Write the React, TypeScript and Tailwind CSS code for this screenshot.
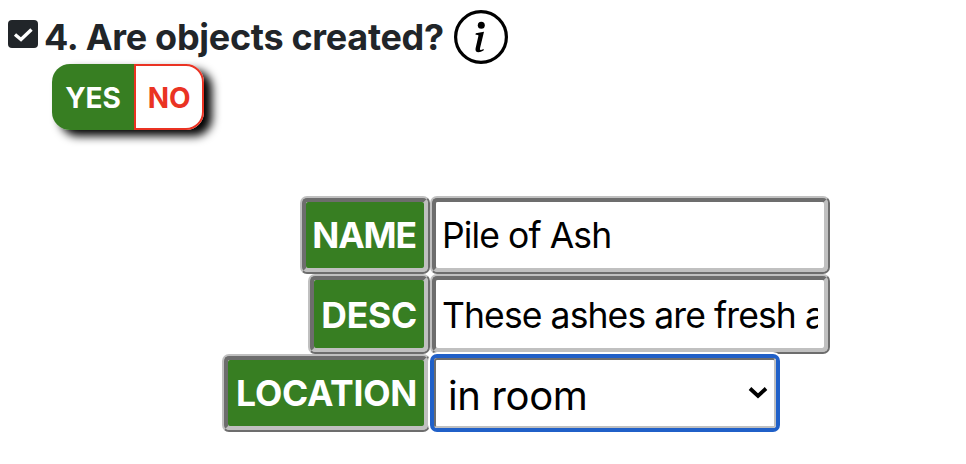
import type { ReactNode } from "react";

function Groove({ className, children }: { className: string; children: ReactNode }) {
  return (
    <div className={`shrink-0 rounded-[7px] border-2 border-t-[#c0c0c0] border-l-[#c0c0c0] border-r-[#6d6d6d] border-b-[#6d6d6d] bg-[#c0c0c0] ${className}`}>
      <div className="flex h-full items-center overflow-hidden rounded-[5px] border-4 border-t-[#6d6d6d] border-l-[#6d6d6d] border-r-[#c0c0c0] border-b-[#c0c0c0] bg-inherit">
        {children}
      </div>
    </div>
  );
}

function Label({ className, textClass, children }: { className: string; textClass: string; children: ReactNode }) {
  return (
    <Groove className={className}>
      <div className={`flex h-full w-full items-center justify-end rounded-[2px] bg-[#377e22] text-[35.5px] font-bold text-white ${textClass}`}>
        {children}
      </div>
    </Groove>
  );
}

function Field({ className, textClass, children }: { className: string; textClass: string; children: ReactNode }) {
  return (
    <Groove className={className}>
      <div className={`flex h-full w-full items-center rounded-[2px] bg-white px-[6px] text-[35.5px] tracking-[-0.9px] text-black ${textClass}`}>
        <div className="w-full overflow-hidden whitespace-nowrap">{children}</div>
      </div>
    </Groove>
  );
}

export default function App() {
  return (
    <div className="h-[464px] w-[966px] overflow-hidden bg-white font-['Inter',sans-serif] leading-[44px]">
      <div className="flex h-16 items-start">
        <svg className="mt-5 ml-2 h-7 w-[30px] shrink-0" viewBox="0 0 30 28">
          <rect width="30" height="28" rx="4" fill="#212529" />
          <path d="M7 14.5 L13 19.5 L23.5 9.5" fill="none" stroke="#fff" strokeWidth="3.4" />
        </svg>
        <h1 className="mt-[15px] ml-[6px] w-[410px] shrink-0 text-[36px] font-bold whitespace-nowrap text-[#212529]">
          <span className="tracking-[-0.3px]">4. Are objects created?</span>
        </h1>
        <svg className="mt-[10px] h-[54px] w-[54px] shrink-0" viewBox="0 0 54 54">
          <circle cx="27" cy="27" r="25.4" fill="#fff" stroke="#000" strokeWidth="3.2" />
          <circle cx="27.3" cy="15.2" r="3.5" fill="#000" />
          <path d="M21.8 23.3 L30 21.8 L26 38.3 Q25.5 40.3 27 39.9 L29.8 38.9 L29.5 40.6 Q26.8 42.3 24.5 42.3 Q20.9 42.1 21.6 38.3 L24.5 25.6 Q24 24.4 21.5 24.7Z" fill="#000" />
        </svg>
      </div>

      <div className="ml-[52px] flex h-[66px] w-[152px] rounded-[18px] text-[28px] font-bold tracking-[-0.1px] shadow-[8px_6px_10px_0px_#000]">
        <div className="flex w-[82px] items-center justify-center rounded-l-[18px] bg-[#377e22] pt-[2px] text-white">YES</div>
        <div className="flex w-[70px] items-center justify-center rounded-r-[18px] border-2 border-[#ea3323] bg-white pt-[2px] text-[#ea3323]">NO</div>
      </div>

      <div className="mt-[66px] flex flex-col">
        <div className="flex h-[78px] pl-[300px]">
          <Label className="h-[78px] w-[130px]" textClass="pt-[2px] pr-2 tracking-[-1.1px]">NAME</Label>
          <Field className="h-[78px] w-[400px]" textClass="pt-[2px]">Pile of Ash</Field>
        </div>
        <div className="flex h-20 pl-[308px]">
          <Label className="h-20 w-[122px]" textClass="pt-1 pr-[7px] tracking-[-0.25px]">DESC</Label>
          <Field className="h-20 w-[400px]" textClass="pt-1">These ashes are fresh and warm</Field>
        </div>
        <div className="flex h-[78px] pl-[222px]">
          <Label className="h-[78px] w-[208px]" textClass="pt-[2px] pr-[7px] tracking-[-0.28px]">LOCATION</Label>
          <div className="relative h-[78px] w-[350px] rounded-[7px] border-4 border-[#2060c8] bg-white shadow-[0_0_0_2px_#fff]">
            <div className="flex h-full items-center justify-between rounded-[3px] border-2 border-t-[#6d6d6d] border-l-[#6d6d6d] border-r-[#c0c0c0] border-b-[#c0c0c0] pr-[6px] pl-3 text-[40px] text-black">
              <span className="pt-[5px] tracking-[-0.35px]">in room</span>
              <svg className="h-3 w-5" viewBox="0 0 20 12">
                <path d="M2 1.5 L10 9 L18 1.5" fill="none" stroke="#000" strokeWidth="3.8" />
              </svg>
            </div>
          </div>
        </div>
      </div>
    </div>
  );
}
